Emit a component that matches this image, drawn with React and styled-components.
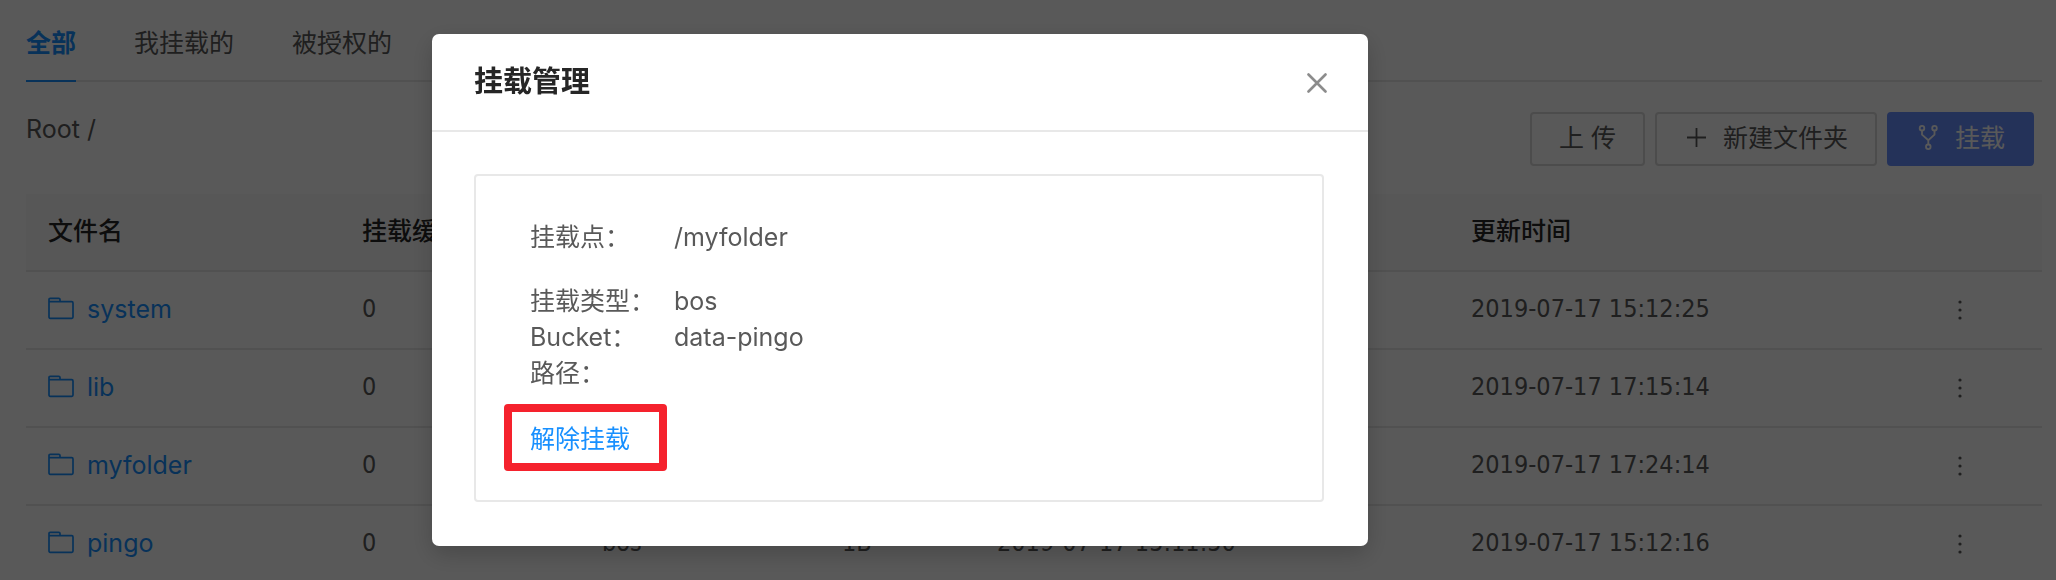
import React, { useState } from "react";
import styled, { createGlobalStyle } from "styled-components";

const GlobalStyle = createGlobalStyle`
  * {
    box-sizing: border-box;
  }

  body {
    margin: 0;
    overflow: hidden;
    background: #fff;
    color: #595959;
    font-family: Inter, "Noto Sans CJK SC", sans-serif;
    font-size: 25px;
    line-height: 36px;
  }

  button {
    font: inherit;
    cursor: pointer;
  }

  svg {
    display: block;
    flex: none;
  }
`;

const Page = styled.main`
  height: 100vh;
  overflow: hidden;
  padding: 0 14px 0 26px;
`;

const Tabs = styled.nav`
  display: flex;
  gap: 58px;
  height: 82px;
  border-bottom: 2px solid #e8e8e8;
`;

const Tab = styled.button`
  height: 82px;
  padding: 6px 0 0;
  border: none;
  border-bottom: 2px solid ${(p) => (p.$active ? "#1890ff" : "transparent")};
  background: none;
  color: ${(p) => (p.$active ? "#1890ff" : "#595959")};
  font-weight: ${(p) => (p.$active ? 600 : 400)};
`;

const Toolbar = styled.div`
  display: flex;
  justify-content: space-between;
  padding: 30px 8px 28px 0;
`;

const Breadcrumb = styled.div`
  line-height: 34px;
`;

const Actions = styled.div`
  display: flex;
  gap: 10px;
`;

const Button = styled.button`
  display: flex;
  align-items: center;
  gap: 14px;
  height: 54px;
  padding: 0 27px 3px;
  border: 2px solid ${(p) => (p.$primary ? "#678fff" : "#d9d9d9")};
  border-radius: 4px;
  background: ${(p) => (p.$primary ? "#678fff" : "#fff")};
  color: ${(p) => (p.$primary ? "#fff" : "#595959")};
`;

const Table = styled.table`
  width: 100%;
  table-layout: fixed;
  border-collapse: separate;
  border-spacing: 0;
`;

const Column = styled.col`
  width: ${(p) => p.$width}px;
`;

const HeadCell = styled.th`
  height: 78px;
  padding: 0 22px 2px;
  border-bottom: 2px solid #e8e8e8;
  background: #fafafa;
  color: #262626;
  font-weight: 500;
  text-align: left;
  white-space: nowrap;
`;

const Cell = styled.td`
  height: 78px;
  padding: 0 22px 2px;
  border-bottom: 2px solid #e8e8e8;
  font-family: "DejaVu Sans Condensed", "Noto Sans CJK SC", sans-serif;
  white-space: nowrap;
`;

const FileLink = styled.a`
  display: flex;
  align-items: center;
  gap: 13px;
  color: #1890ff;
  font-family: Inter, "Noto Sans CJK SC", sans-serif;
  text-decoration: none;
`;

const MoreButton = styled.button`
  display: flex;
  justify-content: center;
  width: 100%;
  padding: 2px 0 0;
  border: none;
  background: none;
  color: #595959;
`;

const Overlay = styled.div`
  position: fixed;
  inset: 0;
  display: flex;
  justify-content: center;
  align-items: flex-start;
  padding: 34px 256px 0 0;
  background: rgba(0, 0, 0, 0.65);
`;

const Modal = styled.section`
  width: 936px;
  border-radius: 7px;
  background: #fff;
  box-shadow: 0 8px 24px rgba(0, 0, 0, 0.2);
`;

const ModalHeader = styled.header`
  display: flex;
  align-items: center;
  justify-content: space-between;
  height: 98px;
  padding: 0 41px 0 42px;
  border-bottom: 2px solid #e8e8e8;
`;

const ModalTitle = styled.h2`
  margin: 0;
  color: #262626;
  font-size: 29px;
  font-weight: 600;
`;

const CloseButton = styled.button`
  padding: 2px 0 0;
  border: none;
  background: none;
  color: #8c8c8c;
`;

const ModalBody = styled.div`
  padding: 42px 44px 44px 42px;
`;

const MountCard = styled.div`
  padding: 43px 54px;
  border: 2px solid #e8e8e8;
  border-radius: 4px;
`;

const InfoList = styled.dl`
  display: grid;
  grid-template-columns: 144px 1fr;
  margin: 0 0 28px;
`;

const InfoLabel = styled.dt``;

const InfoValue = styled.dd`
  margin: 0;
`;

const UnmountLink = styled.a`
  position: relative;
  display: block;
  width: fit-content;
  margin-top: 30px;
  color: #1890ff;
  text-decoration: none;

  &::after {
    content: "";
    position: absolute;
    inset: -17px -37px -14px -26px;
    border: 8px solid #f5222d;
    border-radius: 4px;
  }
`;

const FolderIcon = () => (
  <svg width="26" height="26" viewBox="0 0 26 26" fill="none" stroke="currentColor" strokeWidth="1.7">
    <path d="M1 21.1V3.6q0-1.2 1.2-1.2h8.6q1.2 0 1.2 1.2v2.1h11.800q1.2 0 1.2 1.2v14.2q0 1.2-1.2 1.2H2.2Q1 22.300 1 21.100M1 5.700h11" />
  </svg>
);

const PlusIcon = () => (
  <svg width="25" height="25" viewBox="0 0 25 25" stroke="currentColor" strokeWidth="1.8">
    <path d="M3 12.500h19M12.500 3v19" />
  </svg>
);

const ForkIcon = () => (
  <svg width="25" height="25" viewBox="0 0 25 25" fill="none" stroke="currentColor" strokeWidth="1.8">
    <circle cx="6" cy="3.200" r="2.300" />
    <circle cx="18.500" cy="3.200" r="2.300" />
    <circle cx="12.300" cy="21.800" r="2.300" />
    <path d="M6 5.500v4.100l6.300 5.600 6.200-5.600V5.500M12.300 15.200v4.300" />
  </svg>
);

const MoreIcon = () => (
  <svg width="24" height="24" viewBox="0 0 24 24" fill="currentColor">
    <circle cx="12" cy="4" r="1.600" />
    <circle cx="12" cy="12" r="1.600" />
    <circle cx="12" cy="20" r="1.600" />
  </svg>
);

const CloseIcon = () => (
  <svg width="20" height="20" viewBox="0 0 20 20" stroke="currentColor" strokeWidth="2.600" strokeLinecap="round">
    <path d="M1.500 1.500l17 17M18.500 1.500l-17 17" />
  </svg>
);

const tabs = ["全部", "我挂载的", "被授权的"];

const columns = [
  { key: "name", title: "文件名", width: 314 },
  { key: "cache", title: "挂载缓存", width: 240 },
  { key: "type", title: "", width: 240 },
  { key: "size", title: "", width: 155 },
  { key: "created", title: "", width: 474 },
  { key: "updated", title: "更新时间", width: 429 },
  { key: "more", title: "", width: 164 },
];

const files = [
  { name: "system", cache: 0, updated: "2019-07-17 15:12:25" },
  { name: "lib", cache: 0, updated: "2019-07-17 17:15:14" },
  { name: "myfolder", cache: 0, updated: "2019-07-17 17:24:14" },
  {
    name: "pingo",
    cache: 0,
    type: "bos",
    size: "1B",
    created: "2019-07-17 15:11:50",
    updated: "2019-07-17 15:12:16",
  },
];

const FileTable = () => (
  <Table>
    <colgroup>
      {columns.map((column) => (
        <Column key={column.key} $width={column.width} />
      ))}
    </colgroup>
    <thead>
      <tr>
        {columns.map((column) => (
          <HeadCell key={column.key}>{column.title}</HeadCell>
        ))}
      </tr>
    </thead>
    <tbody>
      {files.map((file) => (
        <tr key={file.name}>
          <Cell>
            <FileLink href={`#${file.name}`}>
              <FolderIcon />
              {file.name}
            </FileLink>
          </Cell>
          <Cell>{file.cache}</Cell>
          <Cell>{file.type}</Cell>
          <Cell>{file.size}</Cell>
          <Cell>{file.created}</Cell>
          <Cell>{file.updated}</Cell>
          <Cell>
            <MoreButton aria-label="更多">
              <MoreIcon />
            </MoreButton>
          </Cell>
        </tr>
      ))}
    </tbody>
  </Table>
);

const MountModal = ({ onClose }) => (
  <Overlay>
    <Modal role="dialog" aria-labelledby="mount-title">
      <ModalHeader>
        <ModalTitle id="mount-title">挂载管理</ModalTitle>
        <CloseButton aria-label="关闭" onClick={onClose}>
          <CloseIcon />
        </CloseButton>
      </ModalHeader>
      <ModalBody>
        <MountCard>
          <InfoList>
            <InfoLabel>挂载点：</InfoLabel>
            <InfoValue>/myfolder</InfoValue>
          </InfoList>
          <InfoList>
            <InfoLabel>挂载类型：</InfoLabel>
            <InfoValue>bos</InfoValue>
            <InfoLabel>Bucket：</InfoLabel>
            <InfoValue>data-pingo</InfoValue>
            <InfoLabel>路径：</InfoLabel>
            <InfoValue />
          </InfoList>
          <UnmountLink href="#unmount">解除挂载</UnmountLink>
        </MountCard>
      </ModalBody>
    </Modal>
  </Overlay>
);

const App = () => {
  const [activeTab, setActiveTab] = useState(tabs[0]);
  const [modalOpen, setModalOpen] = useState(true);

  return (
    <>
      <GlobalStyle />
      <Page>
        <Tabs>
          {tabs.map((tab) => (
            <Tab key={tab} $active={tab === activeTab} onClick={() => setActiveTab(tab)}>
              {tab}
            </Tab>
          ))}
        </Tabs>
        <Toolbar>
          <Breadcrumb>Root /</Breadcrumb>
          <Actions>
            <Button>上 传</Button>
            <Button>
              <PlusIcon />
              新建文件夹
            </Button>
            <Button $primary onClick={() => setModalOpen(true)}>
              <ForkIcon />
              挂载
            </Button>
          </Actions>
        </Toolbar>
        <FileTable />
      </Page>
      {modalOpen && <MountModal onClose={() => setModalOpen(false)} />}
    </>
  );
};

export default App;
